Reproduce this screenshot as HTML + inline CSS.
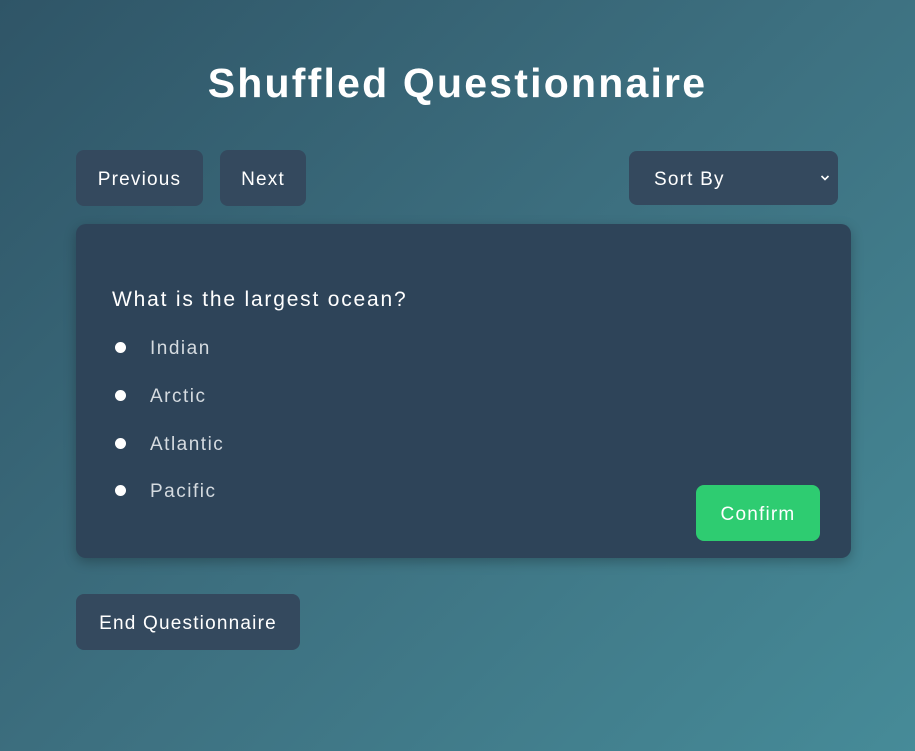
<!DOCTYPE html>
<html><head><style>
html,body{margin:0;padding:0}
body{width:915px;height:751px;overflow:hidden;background:linear-gradient(135deg,#2f5567 0%,#3d7080 50%,#468b98 100%);font-family:"Liberation Sans",sans-serif;color:#fff;position:relative}
h1{position:absolute;top:60px;left:0;width:915px;text-align:center;margin:0;font-size:41px;font-weight:bold;letter-spacing:2.2px}
.btn{position:absolute;background:#34495e;border-radius:8px;font-size:19px;display:flex;align-items:center;justify-content:center;color:#fff;letter-spacing:1.2px;padding-top:3px;box-sizing:border-box}
.card{position:absolute;left:76px;top:224px;width:775px;height:334px;background:#2e4459;border-radius:10px;box-shadow:0 4px 12px rgba(0,0,0,.25)}
.q{position:absolute;left:36px;top:64px;font-size:21px;letter-spacing:1.8px;white-space:nowrap}
.opt{position:absolute;left:39px;font-size:19px;color:#d5dbe0;letter-spacing:1.5px}
.opt i{position:absolute;left:0;top:4px;width:11px;height:11px;border-radius:50%;background:#fff}
.opt span{position:absolute;left:35px;top:0;white-space:nowrap}
</style></head><body>
<h1>Shuffled Questionnaire</h1>
<div class="btn" style="left:76px;top:150px;width:127px;height:56px">Previous</div>
<div class="btn" style="left:220px;top:150px;width:86px;height:56px">Next</div>
<div class="btn" style="left:629px;top:151px;width:209px;height:54px;justify-content:flex-start"><span style="margin-left:25px">Sort By</span><svg style="position:absolute;right:8px;top:23px" width="10" height="8" viewBox="0 0 10 8"><path d="M1.5 2 L5 5.5 L8.5 2" stroke="#fff" stroke-width="1.6" fill="none"/></svg></div>
<div class="card">
<div class="q">What is the largest ocean?</div>
<div class="opt" style="top:114px"><i></i><span>Indian</span></div>
<div class="opt" style="top:162px"><i></i><span>Arctic</span></div>
<div class="opt" style="top:210px"><i></i><span>Atlantic</span></div>
<div class="opt" style="top:257px"><i></i><span>Pacific</span></div>
<div class="btn" style="left:620px;top:261px;width:124px;height:56px;background:#2ecc71">Confirm</div>
</div>
<div class="btn" style="left:76px;top:594px;width:224px;height:56px">End Questionnaire</div>
</body></html>
